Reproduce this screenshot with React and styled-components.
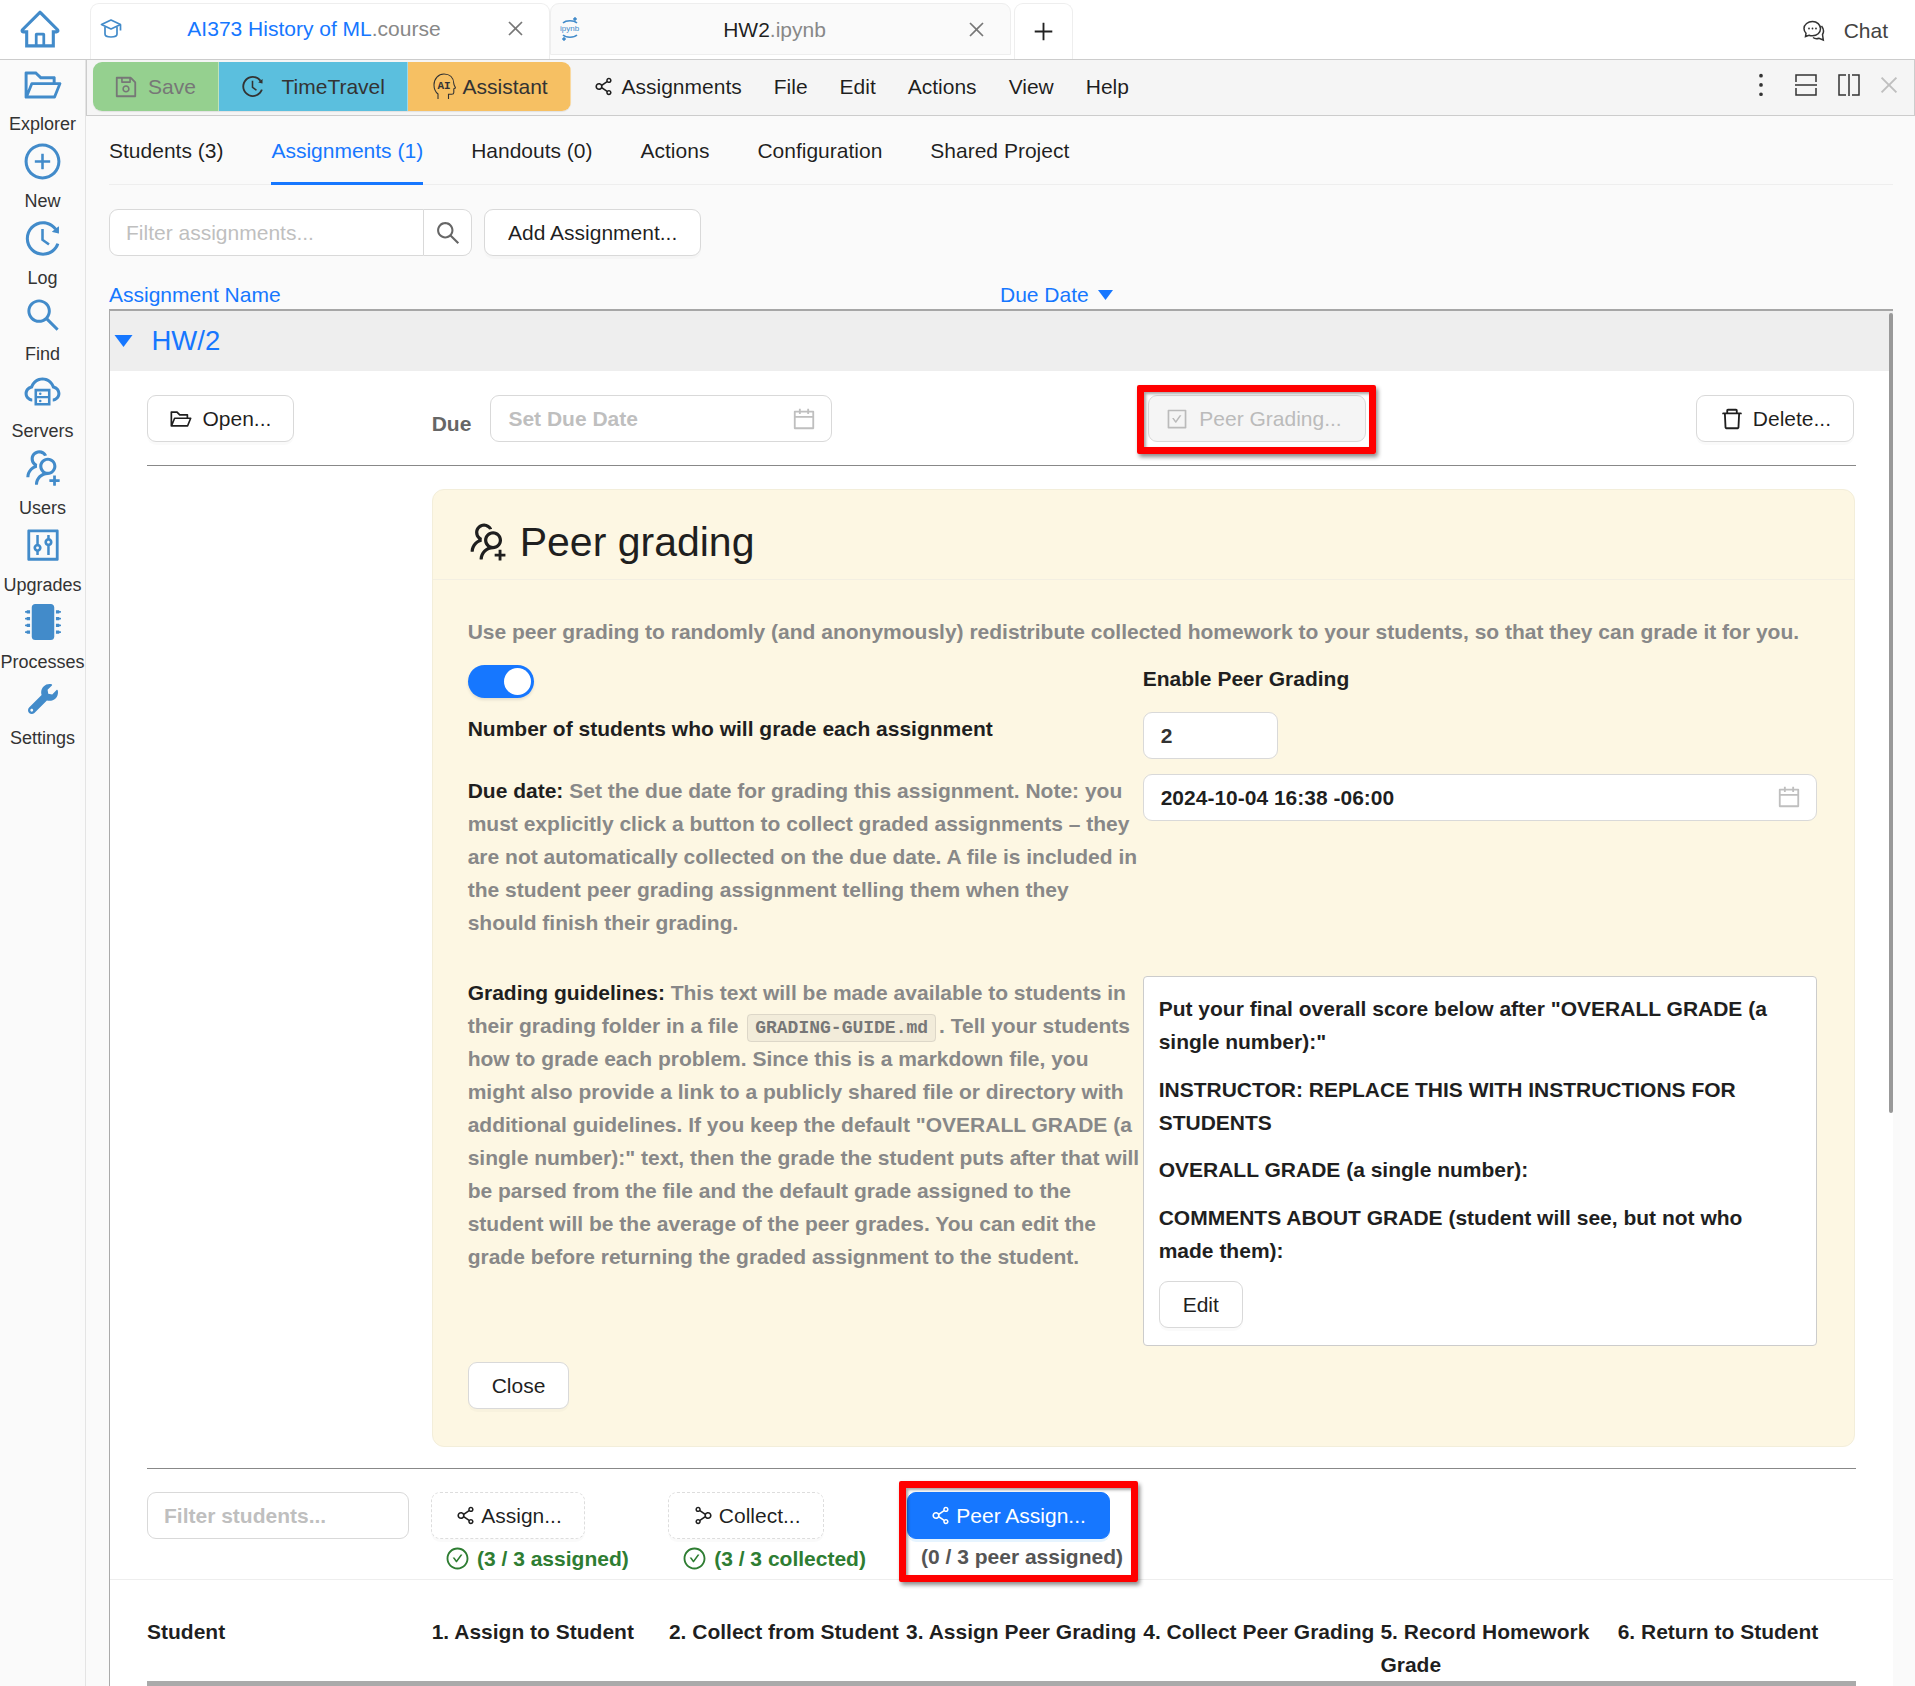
import React from 'react'
import styled, { createGlobalStyle } from 'styled-components'
import {
  AiOutlineHome, AiOutlineFolderOpen, AiOutlinePlusCircle, AiOutlineHistory, AiOutlineSearch,
  AiOutlineCloudServer, AiOutlineUsergroupAdd, AiOutlineControl, AiOutlineSave,
  AiOutlineShareAlt, AiOutlineClose, AiOutlineMore, AiOutlineCalendar, AiOutlineCheckSquare,
  AiOutlineDelete, AiOutlineCheckCircle, AiOutlinePlus,
} from 'react-icons/ai'
import { FaMicrochip, FaWrench } from 'react-icons/fa'

const Global = createGlobalStyle`
  html, body { margin: 0; padding: 0; height: 100%; overflow: hidden; }
  * { box-sizing: border-box; }
  svg { flex: none; }
`

const BLUE = '#1677ff'
const NAV = '#428bca'

const Page = styled.div`
  height: 100vh;
  overflow: hidden;
  background: #fafafa;
  font-family: "Liberation Sans", Arial, sans-serif;
  font-size: 21px;
  line-height: 33px;
  color: rgba(0, 0, 0, 0.88);
`
const TopBar = styled.div`
  height: 60px;
  background: #fff;
  border-bottom: 1px solid #ccc;
  display: flex;
`
const HomeBox = styled.div`
  width: 86px;
  flex: none;
  display: flex;
  justify-content: center;
  padding-top: 7px;
  padding-right: 7px;
  color: ${NAV};
`
const Tabs = styled.div`
  display: flex;
  padding: 3px 0 0 3.5px;
`
const FileTab = styled.div`
  width: ${p => p.$w}px;
  height: ${p => (p.$active ? '56px' : '52px')};
  margin-right: ${p => p.$mr || 0}px;
  display: flex;
  align-items: center;
  padding: 0 23px ${p => (p.$active ? '6px' : '0')} 9px;
  background: ${p => (p.$active ? '#fff' : '#fafafa')};
  border: 1px solid #eee;
  border-bottom: ${p => (p.$active ? 'none' : '1px solid #eee')};
  border-radius: 9px 9px 0 0;
`
const TabIcon = styled.span`
  width: 24px;
  flex: none;
  display: flex;
  color: ${NAV};
`
const TabLabel = styled.span`
  flex: 1;
  text-align: center;
  color: ${p => (p.$active ? BLUE : 'rgba(0,0,0,0.88)')};
`
const Ext = styled.span`
  color: #888;
`
const TabClose = styled.span`
  display: flex;
  color: #777;
`
const PlusTab = styled.div`
  width: 59px;
  height: 56px;
  display: flex;
  align-items: center;
  justify-content: center;
  background: #fff;
  border: 1px solid #eee;
  border-bottom: none;
  border-radius: 9px 9px 0 0;
  color: #222;
`
const ChatBox = styled.div`
  margin-left: auto;
  display: flex;
  align-items: center;
  padding: 2px 27px 0 0;
  gap: 19px;
  color: #434343;
`
const Body = styled.div`
  display: flex;
  height: calc(100vh - 60px);
`
const Sidebar = styled.div`
  width: 86px;
  flex: none;
  background: #fafafa;
  border-right: 1px solid #e4e4e4;
`
const NavItem = styled.div`
  height: 76.8px;
  display: flex;
  flex-direction: column;
  align-items: center;
`
const NavIcon = styled.div`
  height: 49px;
  margin-bottom: 3px;
  display: flex;
  align-items: center;
  justify-content: center;
  color: ${NAV};
`
const NavLabel = styled.div`
  font-size: 18px;
  line-height: 24.8px;
  color: #333;
  white-space: nowrap;
`
const Main = styled.div`
  flex: 1;
  min-width: 0;
`
const Toolbar = styled.div`
  height: 56px;
  display: flex;
  align-items: flex-start;
  padding: 2px 0 0 6px;
  background: #f5f5f5;
  border: 1px solid #ccc;
  border-top: none;
`
const ButtonGroup = styled.div`
  display: flex;
  height: 49px;
  border-radius: 9px;
  overflow: hidden;
  box-shadow: 0 1px 1px rgba(0, 0, 0, 0.08);
`
const ColorButton = styled.div`
  width: ${p => p.$w}px;
  background: ${p => p.$bg};
  color: ${p => p.$fg || '#333'};
  display: flex;
  align-items: center;
  padding-left: ${p => p.$pl}px;
  gap: ${p => p.$gap}px;
  border-right: 1px solid rgba(255, 255, 255, 0.4);
`
const Menu = styled.div`
  display: flex;
  height: 49px;
  align-items: center;
  padding-left: 21px;
  gap: 32px;
`
const MenuItem = styled.div`
  display: flex;
  align-items: center;
  gap: 7px;
`
const ToolIcons = styled.div`
  margin-left: auto;
  height: 49px;
  display: flex;
  align-items: center;
  padding: 0 13px 4px 0;
  color: #333;
`
const ToolIcon = styled.span`
  display: flex;
  margin-left: ${p => p.$ml}px;
  color: ${p => p.$color || '#333'};
`
const Content = styled.div`
  position: relative;
  padding: 0 22px 0 23px;
`
const TabBar = styled.div`
  display: flex;
  gap: 48px;
  border-bottom: 1px solid #eee;
  height: 69px;
`
const TabItem = styled.div`
  padding-top: 18px;
  height: 69px;
  border-bottom: 3px solid ${p => (p.$active ? BLUE : 'transparent')};
  color: ${p => (p.$active ? BLUE : 'inherit')};
`
const FilterRow = styled.div`
  display: flex;
  gap: 12px;
  margin-top: 24px;
`
const InputGroup = styled.div`
  display: flex;
  height: 47px;
`
const FilterInput = styled.div`
  width: 315px;
  background: #fff;
  border: 1px solid #d9d9d9;
  border-radius: 9px 0 0 9px;
  padding: 6px 16px;
  color: #bfbfbf;
`
const SearchButton = styled.div`
  width: 48px;
  background: #fff;
  border: 1px solid #d9d9d9;
  border-left: none;
  border-radius: 0 9px 9px 0;
  display: flex;
  align-items: center;
  justify-content: center;
  color: #666;
`
const Button = styled.div`
  height: 47px;
  display: inline-flex;
  align-items: center;
  justify-content: center;
  gap: 9px;
  padding: 0 23px;
  background: #fff;
  border: 1px solid #d9d9d9;
  border-radius: 9px;
  box-shadow: 0 3px 0 rgba(0, 0, 0, 0.02);
  white-space: nowrap;
  font-weight: normal;
`
const OpenButton = styled(Button)`
  padding: 0 22px 0 21px;
  gap: 9.5px;
`
const GhostButton = styled(Button)`
  background: #f5f5f5;
  color: #bbb;
  width: 218px;
  box-shadow: none;
  justify-content: flex-start;
  padding: 0 0 0 16px;
  gap: 10px;
`
const DeleteButton = styled(Button)`
  margin-right: 2px;
  padding: 0 22px;
  gap: 8px;
`
const DashedButton = styled(Button)`
  width: ${p => p.$w}px;
  gap: 4px;
  padding: 0;
  border: 1px dashed #ddd;
`
const PrimaryButton = styled(Button)`
  width: 203px;
  gap: 4px;
  padding: 0 2px 0 0;
  background: ${BLUE};
  border-color: ${BLUE};
  color: #fff;
  box-shadow: 0 3px 0 rgba(5, 145, 255, 0.1);
`
const HeaderRow = styled.div`
  display: flex;
  margin-top: 22px;
  height: 30.5px;
  color: ${BLUE};
`
const NameHead = styled.div`
  width: 891px;
`
const DueHead = styled.div`
  height: 33px;
  display: flex;
  align-items: center;
  gap: 9px;
`
const ListBox = styled.div`
  position: relative;
  border-top: 2px solid #a6a6a6;
  border-left: 1px solid #aaa;
`
const Scrollbar = styled.div`
  position: absolute;
  top: 2px;
  right: 0;
  width: 4px;
  height: 800px;
  border-radius: 2px;
  background: #999;
`
const HwHeader = styled.div`
  height: 60.5px;
  background: #eee;
  display: flex;
  align-items: center;
  padding-left: 4px;
  gap: 18.5px;
  font-size: 27.5px;
  color: ${BLUE};
`
const Detail = styled.div`
  background: #fff;
  height: 1400px;
`
const TopRow = styled.div`
  display: grid;
  grid-template-columns: 284.7px 711.6px 1fr auto;
  padding: 24px 37px 0;
  height: 93.5px;
`
const DueCell = styled.div`
  display: flex;
  gap: 19px;
`
const DueLabel = styled.div`
  padding-top: 12px;
  font-weight: bold;
  color: #666;
`
const DateInput = styled.div`
  width: ${p => p.$w};
  height: 47px;
  background: #fff;
  border: 1px solid #d9d9d9;
  border-radius: 9px;
  display: flex;
  align-items: center;
  justify-content: space-between;
  padding: 0 14px 0 17px;
  font-weight: bold;
  color: ${p => (p.$muted ? '#bfbfbf' : 'rgba(0,0,0,0.88)')};
`
const CalIcon = styled.span`
  display: flex;
  color: #bfbfbf;
`
const PeerCell = styled.div`
  position: relative;
  padding-left: 5px;
`
const Highlight = styled.div`
  position: absolute;
  left: ${p => p.$l}px;
  top: ${p => p.$t}px;
  width: ${p => p.$w}px;
  height: ${p => p.$h}px;
  border: 7px solid #f00;
  border-radius: 2px;
  box-shadow: 2px 3px 4px rgba(0, 0, 0, 0.45), inset 2px 2px 3px rgba(0, 0, 0, 0.35);
  pointer-events: none;
`
const Rule = styled.div`
  height: 1px;
  margin: 0 37px;
  background: #888;
`
const PanelWrap = styled.div`
  padding: 23px 38.5px 21.5px 321.7px;
`
const Panel = styled.div`
  background: #fdf7e3;
  border: 1px solid #f3eeda;
  border-radius: 12px;
  height: 958px;
`
const PanelHead = styled.div`
  height: 90px;
  padding: 15px 36px 0 32px;
  display: flex;
  align-items: center;
  gap: 9px;
  font-size: 41px;
  line-height: 40px;
  border-bottom: 1px solid #f3efe2;
  color: #1f1f1f;
`
const PanelBody = styled.div`
  padding: 35px 35px 0;
  font-weight: bold;
  color: #1f1f1f;
`
const Lead = styled.div`
  color: #888;
`
const TwoCols = styled.div`
  display: grid;
  grid-template-columns: 675px 675px;
  margin-top: ${p => p.$mt}px;
  min-height: ${p => p.$h || 0}px;
`
const Toggle = styled.div`
  width: 66px;
  height: 33px;
  margin-top: 3px;
  border-radius: 17px;
  background: ${BLUE};
  padding: 3px;
  display: flex;
  justify-content: flex-end;
  box-shadow: 0 2px 3px rgba(0, 0, 0, 0.1);
`
const Knob = styled.div`
  width: 27px;
  height: 27px;
  border-radius: 50%;
  background: #fff;
`
const Gray = styled.span`
  color: #888;
`
const Code = styled.code`
  font-family: "Liberation Mono", monospace;
  font-size: 18px;
  line-height: 1;
  padding: 3px 7px;
  margin: 0 3px;
  background: rgba(150, 150, 150, 0.1);
  border: 1px solid rgba(100, 100, 100, 0.15);
  border-radius: 4px;
  color: #777;
`
const NumberInput = styled(DateInput)`
  width: 135px;
  color: #333;
`
const GuideBox = styled.div`
  width: 674px;
  height: 370px;
  background: #fff;
  border: 1px solid #ccc;
  border-radius: 4px;
  padding: 15.5px 15px;
`
const GuidePara = styled.div`
  margin-bottom: 14.6px;
`
const CloseRow = styled.div`
  margin-top: 16px;
`
const BottomRow = styled.div`
  display: grid;
  grid-template-columns: 284.7px repeat(6, 237.2px);
  height: 111px;
  padding: 23px 37px 0;
  border-bottom: 1px solid #eee;
`
const StudentFilter = styled.div`
  width: 262px;
  height: 47px;
  border: 1px solid #d9d9d9;
  border-radius: 9px;
  padding: 6px 16px;
  font-weight: bold;
  color: #bfbfbf;
`
const StepCell = styled.div`
  position: relative;
  margin-left: ${p => p.$ml || 0}px;
`
const StatusLine = styled.div`
  display: flex;
  align-items: center;
  gap: 7px;
  margin-top: ${p => p.$mt}px;
  padding-left: ${p => p.$pl}px;
  font-weight: bold;
  white-space: nowrap;
  color: ${p => p.$color};
`
const StepHeader = styled.div`
  display: grid;
  grid-template-columns: 284.7px repeat(6, 237.2px);
  margin: 0 37px;
  padding-top: 35px;
  font-weight: bold;
  border-bottom: 6px solid #aaa;
`
const HeadCell = styled.div`
  padding-right: ${p => p.$pr || 0}px;
`

const HeadAI = () => (
  <svg width="23" height="27" viewBox="0 0 23 27" fill="none" stroke="#333" strokeWidth="1.1">
    <path d="M5 26v-5C2.500 19 1 16 1 12 1 5.500 5.500 1 11 1s9.500 3.500 9.800 9.500c0 1.500 1.700 4 1.700 4.500l-1.700.8v3.700c0 1.200-.8 1.800-2 1.800H15.500V26" />
    <text x="4.500" y="16" fontSize="11" fontWeight="bold" fontFamily="Liberation Mono" fill="#333" stroke="none">AI</text>
  </svg>
)
const CapIcon = () => (
  <svg width="22" height="22" viewBox="0 0 22 22" fill="none" stroke={NAV} strokeWidth="1.7" strokeLinejoin="round">
    <path d="M1.500 6.500 11 2l9.500 4.500L11 11z" />
    <path d="M5 9v7c0 4 12 4 12 0V9" />
    <path d="M20.500 7v5.500" />
  </svg>
)
const JupyterIcon = () => (
  <svg width="20" height="26" viewBox="0 0 20 26" fill="none" stroke={NAV}>
    <path d="M3 7c3-3 11-3 14 0M3 19c3 3 11 3 14 0" strokeWidth="1.6" />
    <circle cx="15" cy="3" r="1.300" fill={NAV} />
    <circle cx="4" cy="23" r="1.300" fill={NAV} />
    <text x="0" y="15" fontSize="8" fontFamily="Liberation Sans" fill={NAV} stroke="none">ipynb</text>
  </svg>
)
const ChatIcon = () => (
  <svg width="22" height="22" viewBox="0 0 22 22" fill="none" stroke="#333" strokeWidth="1.500">
    <path d="M9.500 1.500c-4.500 0-8.500 3-8.500 7 0 2 1 3.800 2 4.800L2.500 16.500l3.500-1.300c1 .4 2.300.6 3.500.6 4.500 0 8-3 8-7s-3.500-7.300-8-7.300z" />
    <path d="M18.500 6c2 2.500 2.500 6 1 8.500l.8 5.500-4.300-1.800c-2 .8-4.500.4-6-.7" />
    <circle cx="6" cy="8.500" r=".9" fill="#333" stroke="none" />
    <circle cx="9.500" cy="8.500" r=".9" fill="#333" stroke="none" />
    <circle cx="13" cy="8.500" r=".9" fill="#333" stroke="none" />
  </svg>
)
const SplitRows = () => (
  <svg width="22" height="22" viewBox="0 0 22 22" fill="none" stroke="#333" strokeWidth="1.500">
    <path d="M1 8V1h20v7M1 14v7h20v-7M0 11h22" />
  </svg>
)
const SplitCols = () => (
  <svg width="22" height="22" viewBox="0 0 22 22" fill="none" stroke="#333" strokeWidth="1.500">
    <path d="M8 1H1v20h7M14 1h7v20h-7M11 0v22" />
  </svg>
)
const Caret = ({ w, h }) => (
  <svg width={w} height={h} viewBox="0 0 18 12">
    <path d="M0 0h18L9 12z" fill={BLUE} />
  </svg>
)
const CollectIcon = () => (
  <AiOutlineShareAlt size={23} style={{ transform: 'scaleX(-1)' }} />
)

const NAV_ITEMS = [
  ['Explorer', <AiOutlineFolderOpen size={42} />],
  ['New', <AiOutlinePlusCircle size={41} />],
  ['Log', <AiOutlineHistory size={41} />],
  ['Find', <AiOutlineSearch size={40} />],
  ['Servers', <AiOutlineCloudServer size={41} />],
  ['Users', <AiOutlineUsergroupAdd size={44} />],
  ['Upgrades', <AiOutlineControl size={40} />],
  ['Processes', <FaMicrochip size={36} />],
  ['Settings', <FaWrench size={30} />],
]
const PAGE_TABS = ['Students (3)', 'Assignments (1)', 'Handouts (0)', 'Actions', 'Configuration', 'Shared Project']
const MENU_ITEMS = ['File', 'Edit', 'Actions', 'View', 'Help']
const STEPS = [
  'Student', '1. Assign to Student', '2. Collect from Student', '3. Assign Peer Grading',
  '4. Collect Peer Grading', '5. Record Homework Grade', '6. Return to Student',
]

const App = () => (
  <Page>
    <Global />
    <TopBar>
      <HomeBox><AiOutlineHome size={44} /></HomeBox>
      <Tabs>
        <FileTab $w={460} $active>
          <TabIcon><CapIcon /></TabIcon>
          <TabLabel $active>AI373 History of ML<Ext>.course</Ext></TabLabel>
          <TabClose><AiOutlineClose size={21} /></TabClose>
        </FileTab>
        <FileTab $w={461} $mr={3.5}>
          <TabIcon><JupyterIcon /></TabIcon>
          <TabLabel>HW2<Ext>.ipynb</Ext></TabLabel>
          <TabClose><AiOutlineClose size={21} /></TabClose>
        </FileTab>
        <PlusTab><AiOutlinePlus size={25} /></PlusTab>
      </Tabs>
      <ChatBox><ChatIcon /><span>Chat</span></ChatBox>
    </TopBar>
    <Body>
      <Sidebar>
        {NAV_ITEMS.map(([label, icon]) => (
          <NavItem key={label}>
            <NavIcon>{icon}</NavIcon>
            <NavLabel>{label}</NavLabel>
          </NavItem>
        ))}
      </Sidebar>
      <Main>
        <Toolbar>
          <ButtonGroup>
            <ColorButton $w={125.500} $bg="#95d08f" $fg="#777" $pl={20} $gap={9}>
              <AiOutlineSave size={26} />Save
            </ColorButton>
            <ColorButton $w={189} $bg="#5bbfde" $pl={21} $gap={17}>
              <AiOutlineHistory size={25} />TimeTravel
            </ColorButton>
            <ColorButton $w={163} $bg="#f6c063" $pl={25} $gap={7}>
              <HeadAI />Assistant
            </ColorButton>
          </ButtonGroup>
          <Menu>
            <MenuItem><AiOutlineShareAlt size={23} />Assignments</MenuItem>
            {MENU_ITEMS.map(m => <MenuItem key={m}>{m}</MenuItem>)}
          </Menu>
          <ToolIcons>
            <ToolIcon><AiOutlineMore size={34} /></ToolIcon>
            <ToolIcon $ml={17}><SplitRows /></ToolIcon>
            <ToolIcon $ml={21}><SplitCols /></ToolIcon>
            <ToolIcon $ml={17} $color="#bfbfbf"><AiOutlineClose size={24} /></ToolIcon>
          </ToolIcons>
        </Toolbar>
        <Content>
          <TabBar>
            {PAGE_TABS.map(t => <TabItem key={t} $active={t === 'Assignments (1)'}>{t}</TabItem>)}
          </TabBar>
          <FilterRow>
            <InputGroup>
              <FilterInput>Filter assignments...</FilterInput>
              <SearchButton><AiOutlineSearch size={28} /></SearchButton>
            </InputGroup>
            <Button>Add Assignment...</Button>
          </FilterRow>
          <HeaderRow>
            <NameHead>Assignment Name</NameHead>
            <DueHead>Due Date <Caret w={15} h={10} /></DueHead>
          </HeaderRow>
          <ListBox>
            <Scrollbar />
            <HwHeader><Caret w={19} h={12} />HW/2</HwHeader>
            <Detail>
              <TopRow>
                <div><OpenButton><AiOutlineFolderOpen size={24} />Open...</OpenButton></div>
                <DueCell>
                  <DueLabel>Due</DueLabel>
                  <DateInput $w="342px" $muted>
                    Set Due Date
                    <CalIcon><AiOutlineCalendar size={26} /></CalIcon>
                  </DateInput>
                </DueCell>
                <PeerCell>
                  <GhostButton><AiOutlineCheckSquare size={24} />Peer Grading...</GhostButton>
                  <Highlight $l={-6} $t={-10} $w={239} $h={69} />
                </PeerCell>
                <DeleteButton><AiOutlineDelete size={26} />Delete...</DeleteButton>
              </TopRow>
              <Rule />
              <PanelWrap>
                <Panel>
                  <PanelHead><AiOutlineUsergroupAdd size={46} />Peer grading</PanelHead>
                  <PanelBody>
                    <Lead>Use peer grading to randomly (and anonymously) redistribute collected homework to your students, so that they can grade it for you.</Lead>
                    <TwoCols $mt={14} $h={50}>
                      <Toggle><Knob /></Toggle>
                      <div>Enable Peer Grading</div>
                    </TwoCols>
                    <TwoCols $mt={0} $h={62}>
                      <div>Number of students who will grade each assignment</div>
                      <NumberInput>2</NumberInput>
                    </TwoCols>
                    <TwoCols $mt={0} $h={202}>
                      <div>
                        Due date: <Gray>Set the due date for grading this assignment. Note: you must explicitly click a button to collect graded assignments – they are not automatically collected on the due date. A file is included in the student peer grading assignment telling them when they should finish their grading.</Gray>
                      </div>
                      <DateInput $w="674px">
                        2024-10-04 16:38 -06:00
                        <CalIcon><AiOutlineCalendar size={26} /></CalIcon>
                      </DateInput>
                    </TwoCols>
                    <TwoCols $mt={0}>
                      <div>
                        Grading guidelines: <Gray>This text will be made available to students in their grading folder in a file <Code>GRADING-GUIDE.md</Code>. Tell your students how to grade each problem. Since this is a markdown file, you might also provide a link to a publicly shared file or directory with additional guidelines. If you keep the default "OVERALL GRADE (a single number):" text, then the grade the student puts after that will be parsed from the file and the default grade assigned to the student will be the average of the peer grades. You can edit the grade before returning the graded assignment to the student.</Gray>
                      </div>
                      <GuideBox>
                        <GuidePara>Put your final overall score below after "OVERALL GRADE (a single number):"</GuidePara>
                        <GuidePara>INSTRUCTOR: REPLACE THIS WITH INSTRUCTIONS FOR STUDENTS</GuidePara>
                        <GuidePara>OVERALL GRADE (a single number):</GuidePara>
                        <GuidePara>COMMENTS ABOUT GRADE (student will see, but not who made them):</GuidePara>
                        <Button>Edit</Button>
                      </GuideBox>
                    </TwoCols>
                    <CloseRow><Button>Close</Button></CloseRow>
                  </PanelBody>
                </Panel>
              </PanelWrap>
              <Rule />
              <BottomRow>
                <StudentFilter>Filter students...</StudentFilter>
                <StepCell $ml={-0.7}>
                  <DashedButton $w={154}><AiOutlineShareAlt size={23} />Assign...</DashedButton>
                  <StatusLine $pl={14} $mt={3} $color="#2e7d32"><AiOutlineCheckCircle size={25} />(3 / 3 assigned)</StatusLine>
                </StepCell>
                <StepCell $ml={-0.7}>
                  <DashedButton $w={156}><CollectIcon />Collect...</DashedButton>
                  <StatusLine $pl={14} $mt={3} $color="#2e7d32"><AiOutlineCheckCircle size={25} />(3 / 3 collected)</StatusLine>
                </StepCell>
                <StepCell $ml={1}>
                  <PrimaryButton><AiOutlineShareAlt size={23} />Peer Assign...</PrimaryButton>
                  <StatusLine $pl={14} $mt={1} $color="#555">(0 / 3 peer assigned)</StatusLine>
                  <Highlight $l={-8} $t={-11} $w={239} $h={101} />
                </StepCell>
              </BottomRow>
              <StepHeader>
                {STEPS.map(s => <HeadCell key={s} $pr={s.startsWith('5.') ? 20 : 0}>{s}</HeadCell>)}
              </StepHeader>
            </Detail>
          </ListBox>
        </Content>
      </Main>
    </Body>
  </Page>
)

export default App
